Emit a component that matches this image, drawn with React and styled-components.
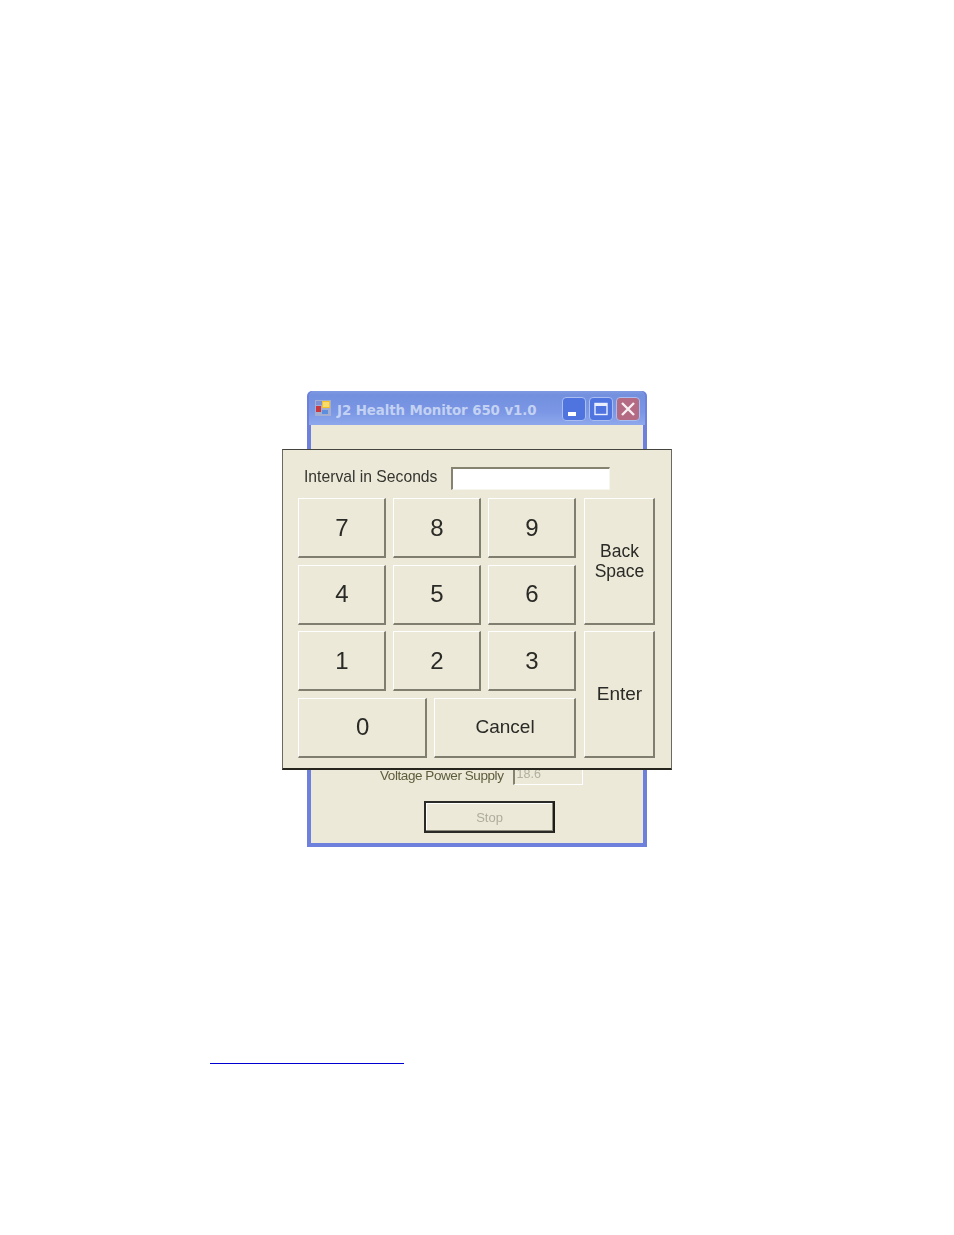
import React from 'react'
import styled, { createGlobalStyle } from 'styled-components'

const Global = createGlobalStyle`
  html, body {
    margin: 0;
    background: #fff;
    font-family: "Liberation Sans", Arial, sans-serif;
  }
`

const Page = styled.div`
  width: 954px;
  height: 1235px;
  padding-top: 391px;
  box-sizing: border-box;
`

const Window = styled.div`
  position: relative;
  width: 340px;
  height: 456px;
  margin-left: 307px;
  display: flex;
  flex-direction: column;
  box-sizing: border-box;
  border-radius: 5px 5px 0 0;
  background: #6c80dc;
  padding: 0 4px 4px;
  filter: blur(0.35px);
`

const TitleBar = styled.div`
  height: 34px;
  margin: 0 -2px 0 -2px;
  padding: 0 5px 0 6px;
  display: flex;
  align-items: center;
  border-radius: 5px 5px 0 0;
  background: linear-gradient(180deg, #7f9ae2 0%, #7390de 12%, #7a96e4 60%, #8fa8ec 100%);
`

const Title = styled.span`
  flex: 1;
  margin-left: 6px;
  margin-top: 5px;
  font-family: "DejaVu Sans", sans-serif;
  font-size: 13.4px;
  font-weight: bold;
  letter-spacing: -0.1px;
  white-space: nowrap;
  color: #c3d2f2;
`

const CtlGroup = styled.div`
  display: flex;
  gap: 3px;
  margin-top: 2px;
`

const Ctl = styled.div`
  width: 24px;
  height: 24px;
  box-sizing: border-box;
  border: 1px solid #a9bdf0;
  border-radius: 4px;
  background: ${p => (p.$close ? '#b36a82' : '#4f74e0')};
  display: flex;
  align-items: center;
  justify-content: center;
`

const Body = styled.div`
  flex: 1;
  background: #ece9d8;
  display: flex;
  flex-direction: column;
  align-items: flex-start;
  justify-content: flex-end;
  padding-bottom: 10px;
`

const VoltRow = styled.div`
  display: flex;
  align-items: flex-start;
  margin-left: 69px;
  gap: 9px;
  margin-bottom: 16px;
`

const VoltLabel = styled.span`
  font-size: 13.5px;
  letter-spacing: -0.43px;
  line-height: 16px;
  color: #5f5c3c;
`

const VoltInput = styled.div`
  width: 70px;
  height: 17px;
  box-sizing: border-box;
  border-left: 2px solid #85836f;
  border-right: 1px solid #fff;
  border-bottom: 1px solid #fff;
  padding-left: 2px;
  font-size: 12.5px;
  line-height: 13px;
  color: #b2b0a0;
`

const StopButton = styled.div`
  width: 131px;
  height: 32px;
  margin-left: 113px;
  box-sizing: border-box;
  border: 2px solid #2a2a26;
  border-right-color: #1c1c1a;
  box-shadow: inset -1px -1px 0 #8d8b7b, inset 1px 1px 0 #fff;
  display: flex;
  align-items: center;
  justify-content: center;
  font-size: 13px;
  color: #aeac9c;
`

const Dialog = styled.div`
  position: absolute;
  left: -25px;
  top: 58px;
  width: 390px;
  height: 321px;
  box-sizing: border-box;
  background: #ece9d8;
  border: 1px solid #6a6a62;
  border-top-color: #45453f;
  border-bottom: 2px solid #26261f;
  padding: 17px 16px 0 15px;
`

const IntervalRow = styled.div`
  display: flex;
  align-items: flex-start;
  height: 25px;
  margin-bottom: 6px;
  padding-left: 6px;
`

const IntervalLabel = styled.label`
  width: 147px;
  font-size: 15.7px;
  line-height: 20px;
  color: #35352f;
`

const IntervalInput = styled.div`
  width: 159px;
  height: 23px;
  box-sizing: border-box;
  background: #fff;
  border-top: 2px solid #85836f;
  border-left: 2px solid #85836f;
  border-right: 1px solid #f6f5ee;
  border-bottom: 1px solid #f6f5ee;
`

const Keypad = styled.div`
  display: flex;
  gap: 8px;
`

const Digits = styled.div`
  width: 278px;
  display: flex;
  flex-direction: column;
  gap: 6.67px;
`

const Row = styled.div`
  display: flex;
  gap: 7px;
`

const Side = styled.div`
  width: 71px;
  display: flex;
  flex-direction: column;
  gap: 6px;
`

const Key = styled.div`
  flex: ${p => p.$flex || 1};
  height: ${p => (p.$tall ? '127px' : '60px')};
  box-sizing: border-box;
  display: flex;
  align-items: center;
  justify-content: center;
  text-align: center;
  padding: ${p => (p.$tall ? '1px' : '0')} 0 0 1px;
  background: #ece9d8;
  border-top: 1px solid #fff;
  border-left: 1px solid #fff;
  border-right: 2px solid #807e6e;
  border-bottom: 2px solid #807e6e;
  font-size: ${p => p.$size || 24}px;
  line-height: 20px;
  color: #2a2a26;
`

const FootRule = styled.div`
  position: absolute;
  left: 210px;
  top: 1063px;
  width: 194px;
  height: 1px;
  background: #0000d0;
`

function AppIcon() {
  return (
    <svg width="16" height="16" viewBox="0 0 16 16">
      <rect x="0" y="0" width="16" height="16" fill="#a4aed0" />
      <rect x="1" y="1" width="6" height="4" fill="#7f93d4" />
      <rect x="1" y="6" width="5" height="6" fill="#c8383c" />
      <rect x="7" y="1" width="8" height="7" fill="#f2c22e" />
      <rect x="8" y="2" width="6" height="5" fill="#f8dc70" />
      <rect x="7" y="10" width="6" height="4" fill="#5c8ee0" />
    </svg>
  )
}

function MinGlyph() {
  return (
    <svg width="16" height="16" viewBox="0 0 16 16">
      <rect x="2" y="11" width="8" height="4" fill="#fff" />
    </svg>
  )
}

function MaxGlyph() {
  return (
    <svg width="16" height="16" viewBox="0 0 16 16">
      <rect x="2" y="2.5" width="12" height="11" fill="none" stroke="#e8eefc" strokeWidth="1.4" />
      <rect x="2" y="2" width="12" height="3" fill="#e8eefc" />
    </svg>
  )
}

function CloseGlyph() {
  return (
    <svg width="16" height="16" viewBox="0 0 16 16">
      <path d="M2 2 L14 14 M14 2 L2 14" stroke="#f6eef0" strokeWidth="2.4" />
    </svg>
  )
}

export default function App() {
  return (
    <Page>
      <Global />
      <Window>
        <TitleBar>
          <AppIcon />
          <Title>J2 Health Monitor 650 v1.0</Title>
          <CtlGroup>
            <Ctl><MinGlyph /></Ctl>
            <Ctl><MaxGlyph /></Ctl>
            <Ctl $close><CloseGlyph /></Ctl>
          </CtlGroup>
        </TitleBar>
        <Body>
          <VoltRow>
            <VoltLabel>Voltage Power Supply</VoltLabel>
            <VoltInput>18.6</VoltInput>
          </VoltRow>
          <StopButton>Stop</StopButton>
        </Body>
        <Dialog>
          <IntervalRow>
            <IntervalLabel>Interval in Seconds</IntervalLabel>
            <IntervalInput />
          </IntervalRow>
          <Keypad>
            <Digits>
              <Row><Key>7</Key><Key>8</Key><Key>9</Key></Row>
              <Row><Key>4</Key><Key>5</Key><Key>6</Key></Row>
              <Row><Key>1</Key><Key>2</Key><Key>3</Key></Row>
              <Row>
                <Key $flex={129}>0</Key>
                <Key $flex={142} $size={19}>Cancel</Key>
              </Row>
            </Digits>
            <Side>
              <Key $tall $size={17.5}>Back<br />Space</Key>
              <Key $tall $size={19}>Enter</Key>
            </Side>
          </Keypad>
        </Dialog>
      </Window>
      <FootRule />
    </Page>
  )
}
